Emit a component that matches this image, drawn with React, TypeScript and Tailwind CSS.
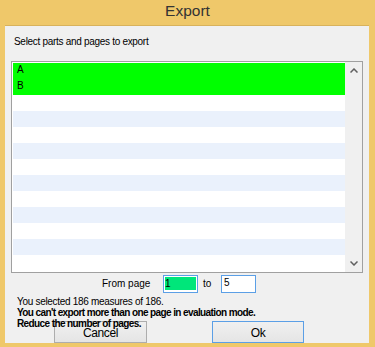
const rows = ["A", "B", "", "", "", "", "", "", "", "", "", "", ""];

const ui = { fontFamily: '"Liberation Sans", Arial, sans-serif' };

const App = () => {
  return (
    <div className="w-[375px] h-[347px] bg-[#efc86a] flex flex-col overflow-hidden" style={ui}>
      {/* Title bar */}
      <div className="h-[25px] flex items-center justify-center pb-[4px] text-[15.5px] text-[#333333]">
        Export
      </div>

      {/* Client area */}
      <div className="ml-[5px] mr-[6px] mb-[4px] flex-1 flex flex-col bg-[#f0f0f0] border-t border-[#d8b25c] text-black">
        <div className="pl-[9px] mt-[10px] text-[10px] leading-[12px] tracking-[-0.3px]">
          Select parts and pages to export
        </div>

        {/* List box */}
        <div className="ml-[6px] mt-[13px] w-[352px] h-[212px] border border-[#a0a0a0] flex bg-white">
          <div className="flex-1 pl-[1px] py-[1px] flex flex-col">
            {rows.map((r, i) => (
              <div
                key={i}
                className={
                  "h-[16px] shrink-0 pl-[4px] text-[10px] leading-[13px] " +
                  (i < 2 ? "bg-[#00ff00]" : i % 2 === 0 ? "bg-white" : "bg-[#eaf1fc]")
                }
              >
                {r}
              </div>
            ))}
          </div>
          <div className="w-[17px] bg-[#f0f0f0] flex flex-col items-center justify-between py-[6px]">
            <svg width="8" height="5" viewBox="0 0 8 5">
              <path d="M0.5 4.5 L4 1 L7.5 4.5" fill="none" stroke="#606060" strokeWidth="1.5" />
            </svg>
            <svg width="8" height="5" viewBox="0 0 8 5">
              <path d="M0.5 0.5 L4 4 L7.5 0.5" fill="none" stroke="#606060" strokeWidth="1.5" />
            </svg>
          </div>
        </div>

        {/* Page range */}
        <div className="mt-[2px] flex items-center text-[10px] leading-[12px]">
          <span className="ml-[97px] w-[61px]">From page</span>
          <div className="w-[35px] h-[18px] border border-[#5b9fe6] bg-white pl-[1px] pr-[1px] pt-[1px] pb-[2px]">
            <div className="h-full w-[31px] bg-[#00e67a] leading-[13px]">1</div>
          </div>
          <span className="ml-[5px] w-[18px]">to</span>
          <div className="w-[35px] h-[18px] border border-[#5b9fe6] bg-white pl-[2px] leading-[14px]">5</div>
        </div>

        {/* Messages (last line runs over the buttons, as in the original dialog) */}
        <div className="relative z-10 ml-[12px] mt-[3px] text-[10px] leading-[11px] tracking-[-0.3px]">
          <div>You selected 186 measures of 186.</div>
          <div className="font-bold tracking-[-0.6px]">You can't export more than one page in evaluation mode.</div>
          <div className="font-bold tracking-[-0.6px]">Reduce the number of pages.</div>
        </div>

        {/* Buttons */}
        <div className="-mt-[8px] flex text-[12px] tracking-[-0.4px]">
          <button className="ml-[49px] w-[93px] h-[22px] border border-[#adadad] bg-gradient-to-b from-[#f0f0f0] to-[#e5e5e5] pt-[2px]">
            Cancel
          </button>
          <button className="ml-[65px] w-[92px] h-[22px] border border-[#5b9fe6] bg-gradient-to-b from-[#f0f0f0] to-[#e5e5e5] pt-[2px]">
            Ok
          </button>
        </div>
      </div>
    </div>
  );
};

export default App;
